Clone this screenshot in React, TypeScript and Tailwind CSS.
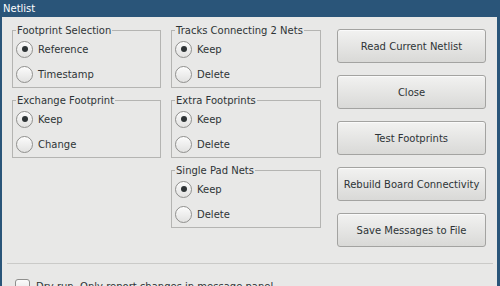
import React from "react";

const font = { fontFamily: '"DejaVu Sans", "Liberation Sans", sans-serif' };

function Radio({ label, checked }: { label: string; checked?: boolean }) {
  return (
    <div className="flex h-[24px] items-center pl-[3px]">
      <div className="flex h-[17px] w-[17px] items-center justify-center rounded-full border border-[#8f8f8d] bg-gradient-to-b from-[#fbfbfb] to-[#e2e2e1] shadow-[inset_0_1px_0_#ffffff]">
        {checked && <div className="h-[6px] w-[6px] rounded-full bg-[#2e3436]" />}
      </div>
      <span className="ml-[5px] text-[10px] leading-[13px] text-[#2e3436]">{label}</span>
    </div>
  );
}

function Group({ title, a, b }: { title: string; a: string; b: string }) {
  return (
    <div className="relative h-[58px] border border-[#b4b4b2] pt-[6px]">
      <span className="absolute left-[3px] top-[-7px] bg-[#e8e8e7] px-[1px] text-[10px] leading-[13px] text-[#2e3436]">
        {title}
      </span>
      <div className="flex flex-col gap-[1px]">
        <Radio label={a} checked />
        <Radio label={b} />
      </div>
    </div>
  );
}

function Btn({ label }: { label: string }) {
  return (
    <div className="flex h-[34px] items-center justify-center rounded-[3px] border border-[#a3a3a1] bg-gradient-to-b from-[#f2f2f1] to-[#d9d9d7] text-[10px] text-[#2e3436] shadow-[inset_0_1px_0_#fafafa]">
      {label}
    </div>
  );
}

export default function App() {
  return (
    <div className="flex h-[286px] w-[500px] flex-col overflow-hidden bg-[#2a5579]" style={font}>
      <div className="flex h-[17px] shrink-0 items-center px-[3px] text-[10px] text-white">Netlist</div>
      <div className="ml-[2px] mr-[3px] flex-1 bg-[#e8e8e7]">
        <div className="flex pl-[10px] pt-[12px]">
          <div className="flex w-[149px] flex-col gap-[12px] pt-[1px]">
            <Group title="Footprint Selection" a="Reference" b="Timestamp" />
            <Group title="Exchange Footprint" a="Keep" b="Change" />
          </div>
          <div className="ml-[10px] flex w-[150px] flex-col gap-[12px] pt-[1px]">
            <Group title="Tracks Connecting 2 Nets" a="Keep" b="Delete" />
            <Group title="Extra Footprints" a="Keep" b="Delete" />
            <Group title="Single Pad Nets" a="Keep" b="Delete" />
          </div>
          <div className="ml-[16px] flex w-[149px] flex-col gap-[12px]">
            <Btn label="Read Current Netlist" />
            <Btn label="Close" />
            <Btn label="Test Footprints" />
            <Btn label="Rebuild Board Connectivity" />
            <Btn label="Save Messages to File" />
          </div>
        </div>
        <div className="ml-[5px] mr-[4px] mt-[16px] border-t border-[#cacac8]" />
        <div className="ml-[13px] mt-[15px] flex items-start">
          <div className="h-[15px] w-[15px] rounded-[3px] border border-[#8f8f8d] bg-gradient-to-b from-[#fbfbfb] to-[#e2e2e1]" />
          <span className="ml-[6px] mt-[1px] text-[10px] leading-[13px] text-[#2e3436]">
            Dry run. Only report changes in message panel
          </span>
        </div>
      </div>
    </div>
  );
}
